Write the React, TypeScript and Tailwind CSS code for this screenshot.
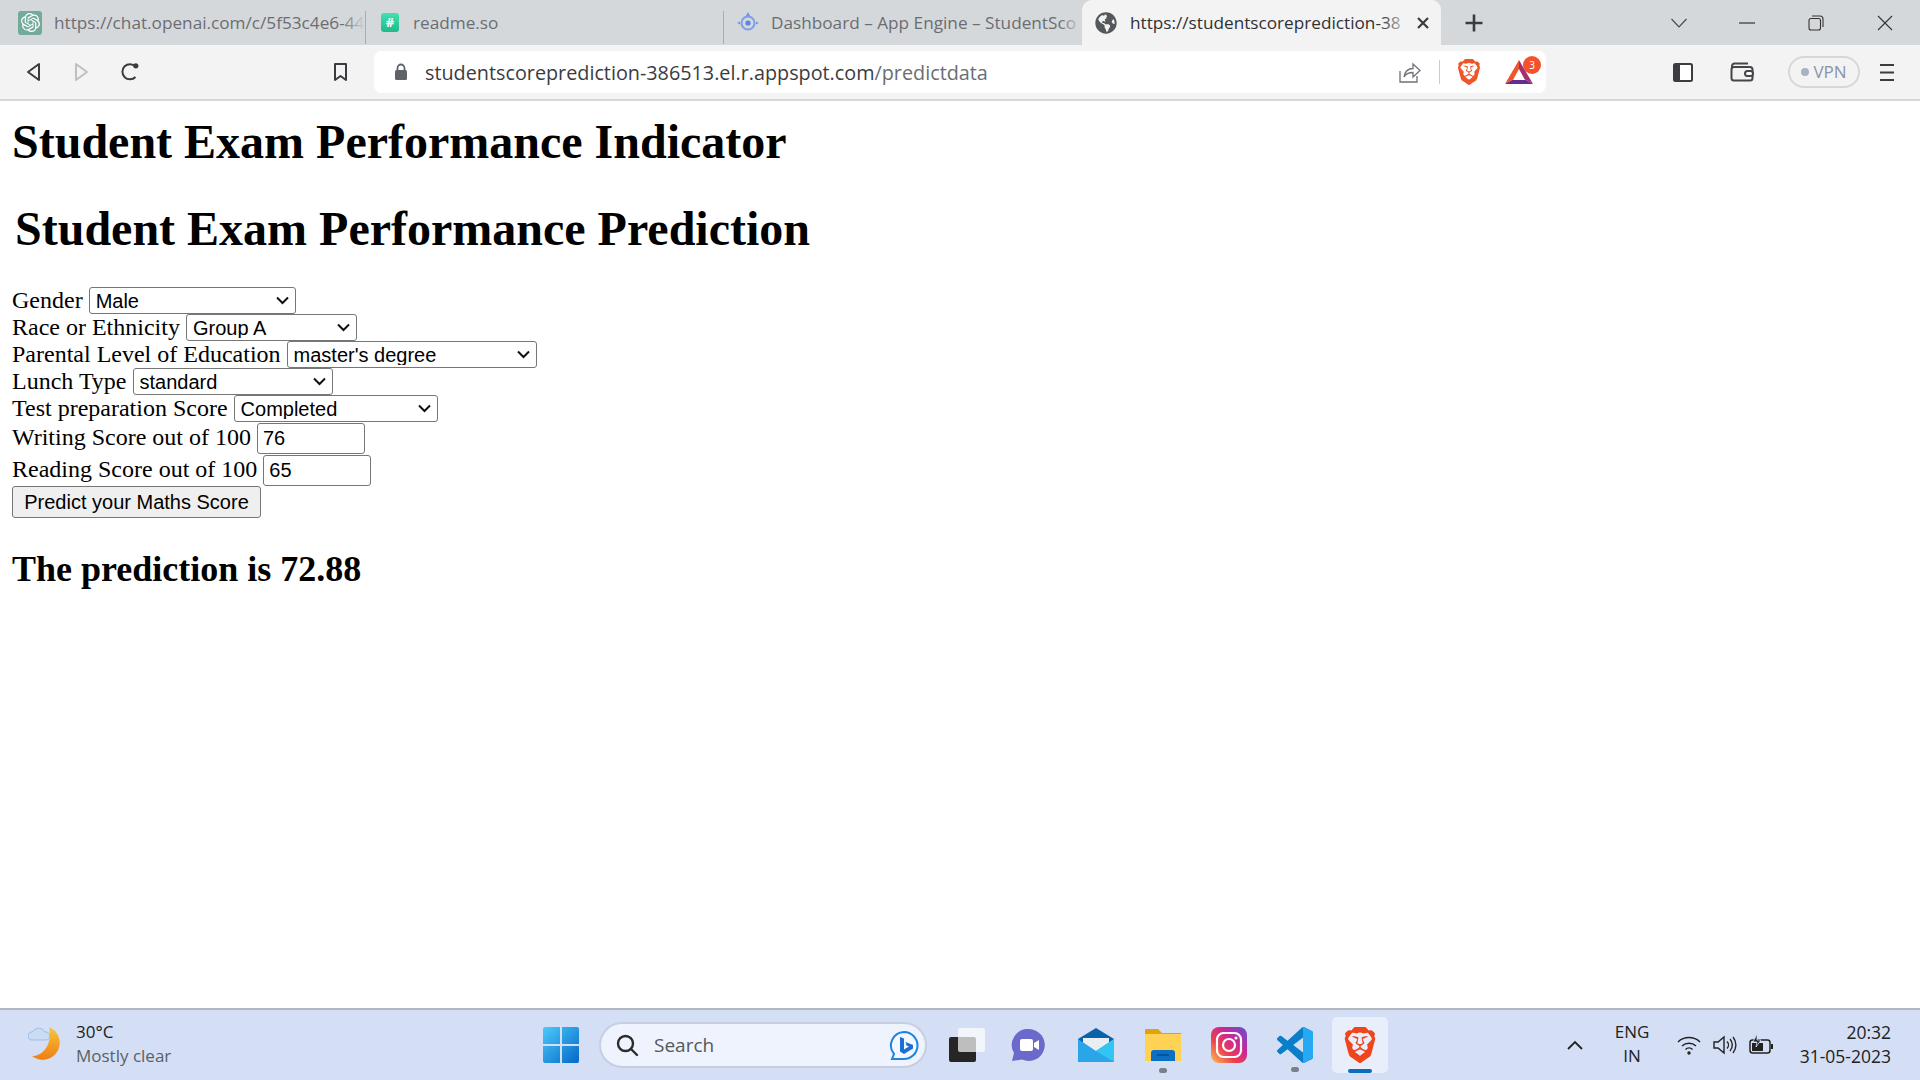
import React from "react";
import { SiOpenai, SiBrave } from "react-icons/si";
import { FaGlobeAmericas } from "react-icons/fa";

const ui = "font-['Open_Sans','Noto_Sans',sans-serif]";

function TabBar() {
  return (
    <div className={`flex h-[45px] bg-[#d5d8db] items-stretch ${ui}`}>
      <div className="w-[366px] shrink-0 flex items-center pl-[18px] relative overflow-hidden">
        <span className="w-[24px] h-[24px] rounded-[3px] bg-[#74aa9c] flex items-center justify-center text-white shrink-0"><SiOpenai size={19} /></span>
        <span className="ml-[12px] text-[17.2px] text-[#6a6e73] whitespace-nowrap">https://chat.openai.com/c/5f53c4e6-44</span>
        <span className="absolute right-0 top-0 bottom-0 w-[24px] bg-gradient-to-r from-transparent to-[#d5d8db]" />
        <span className="absolute right-0 top-[11px] bottom-[1px] w-[1px] bg-[#a9adb1]" />
      </div>
      <div className="w-[358px] shrink-0 flex items-center pl-[15px] relative">
        <span className="w-[18px] h-[19px] rounded-[3px] bg-gradient-to-b from-[#3fe3ae] to-[#22b78c] text-white flex items-center justify-center text-[13px] font-bold leading-none">#</span>
        <span className="ml-[14px] text-[17.2px] text-[#6a6e73]">readme.so</span>
        <span className="absolute right-0 top-[11px] bottom-[1px] w-[1px] bg-[#a9adb1]" />
      </div>
      <div className="w-[358px] shrink-0 flex items-center pl-[11px] relative overflow-hidden">
        <svg className="shrink-0" width="26" height="26" viewBox="0 0 26 26" fill="none">
          <circle cx="13" cy="13" r="6.5" stroke="#7d9ee8" strokeWidth="2" />
          <circle cx="13" cy="13" r="2.6" fill="#5b85e0" />
          <path d="M13 2l2.2 4h-4.4zM2 13l3-1.6v3.2zM24 13l-3-1.6v3.2z" fill="#6f95ea" />
        </svg>
        <span className="ml-[10px] text-[17.2px] text-[#6a6e73] whitespace-nowrap">Dashboard – App Engine – StudentSco</span>
        <span className="absolute right-0 top-0 bottom-0 w-[22px] bg-gradient-to-r from-transparent to-[#d5d8db]" />
      </div>
      <div className="w-[359px] shrink-0 flex items-center pl-[12px] bg-[#f3f3f3] rounded-t-[10px] relative overflow-hidden">
        <span className="text-[#54575b] mr-[13px] ml-[1px]"><FaGlobeAmericas size={22} /></span>
        <span className="text-[17.2px] text-[#2f3134] whitespace-nowrap">https://studentscoreprediction-38</span>
        <span className="absolute right-0 top-0 bottom-0 w-[60px] flex items-center justify-end pr-[11px] bg-gradient-to-r from-transparent via-[#f3f3f3] to-[#f3f3f3]">
          <svg width="14" height="14" viewBox="0 0 14 14" stroke="#3a3c3f" strokeWidth="2.2"><path d="M2 2l10 10M12 2L2 12" /></svg>
        </span>
      </div>
      <div className="ml-[23px] flex items-center">
        <svg width="20" height="20" viewBox="0 0 20 20" stroke="#3a3c3f" strokeWidth="2.6"><path d="M10 1.5v17M1.5 10h17" /></svg>
      </div>
      <div className="ml-auto flex items-center">
        <svg width="18" height="12" viewBox="0 0 18 12" fill="none" stroke="#44464a" strokeWidth="1.1"><path d="M1.5 2L9 10l7.5-8" /></svg>
        <svg className="ml-[51px]" width="16" height="2" viewBox="0 0 16 2" stroke="#333"><path d="M0 1h16" strokeWidth="1.2" /></svg>
        <svg className="ml-[53px]" width="16" height="16" viewBox="0 0 16 16" fill="none" stroke="#333" strokeWidth="1.1"><rect x="1" y="3.5" width="11.5" height="11.5" rx="2" /><path d="M4 1h8a3 3 0 0 1 3 3v8" /></svg>
        <svg className="ml-[53px] mr-[27px]" width="16" height="16" viewBox="0 0 16 16" stroke="#333" strokeWidth="1.1"><path d="M1 1l14 14M15 1L1 15" /></svg>
      </div>
    </div>
  );
}

function Toolbar() {
  return (
    <div className={`flex h-[56px] bg-[#f3f3f3] border-b-2 border-[#d5d8db] items-start ${ui}`}>
      <div className="h-[54px] flex items-center pl-[26px]">
        <svg width="15" height="20" viewBox="0 0 15 20" fill="none" stroke="#3a3c3f" strokeWidth="2" strokeLinejoin="round"><path d="M13 2v16L2 10z" /></svg>
        <svg className="ml-[33px]" width="15" height="20" viewBox="0 0 15 20" fill="none" stroke="#bdbfc2" strokeWidth="2" strokeLinejoin="round"><path d="M2 2v16l11-8z" /></svg>
        <svg className="ml-[31px]" width="20" height="20" viewBox="0 0 20 20" fill="none" stroke="#3a3c3f" strokeWidth="2"><path d="M15.5 15a7.6 7.6 0 1 1 0-10.5" /><circle cx="15.8" cy="3.8" r="2.6" fill="#3a3c3f" stroke="none" /></svg>
        <svg className="ml-[193px]" width="15" height="20" viewBox="0 0 15 20" fill="none" stroke="#3a3c3f" strokeWidth="2" strokeLinejoin="round"><path d="M2 2h11v16l-5.500-4L2 18z" /></svg>
      </div>
      <div className="ml-[26px] mt-[6px] w-[1172px] h-[42px] bg-white rounded-[8px] flex items-center pl-[20px] relative">
        <svg width="14" height="18" viewBox="0 0 14 18"><rect x="1" y="7" width="12" height="10" rx="1.500" fill="#5f6368" /><path d="M3.500 8V5a3.500 3.500 0 0 1 7 0v3" fill="none" stroke="#5f6368" strokeWidth="1.800" /></svg>
        <span className="ml-[17px] mt-[1px] text-[19.8px] text-[#3a3c3f] whitespace-nowrap">studentscoreprediction-386513.el.r.appspot.com<span className="text-[#6a6e73]">/predictdata</span></span>
        <div className="ml-auto flex items-center">
          <svg width="23" height="21" viewBox="0 0 23 21" fill="none" stroke="#6f7276" strokeWidth="1.300"><path d="M2 9v11h17v-6" /><path d="M6 15c1-6 5-8.500 9-8.500V2l7 6.500-7 6.500v-4.500c-4 0-7 1-9 4.500z" /></svg>
          <span className="ml-[18px] w-[1px] h-[24px] bg-[#c9cbce]" />
          <span className="ml-[16px] text-[#f0552a]"><SiBrave size={26} /></span>
          <span className="ml-[23px] mr-[13px] relative w-[28px] h-[24px] block">
            <svg width="28" height="24" viewBox="0 0 28 24"><path d="M14 0L0 24l14-8z" fill="#f0552a" /><path d="M14 0l14 24-14-8z" fill="#a42f6f" /><path d="M0 24h28l-14-8z" fill="#662d91" /><path d="M14 9l-6 11h12z" fill="#fff" /></svg>
            <span className="absolute -right-[8px] -top-[4px] w-[18px] h-[18px] rounded-full bg-[#f4512c] text-white text-[10px] leading-[18px] text-center">3</span>
          </span>
        </div>
      </div>
      <div className="h-[54px] flex items-center ml-[127px]">
        <svg width="20" height="19" viewBox="0 0 20 19"><rect x="1" y="1" width="18" height="17" rx="1.500" fill="#fff" stroke="#3a3c3f" strokeWidth="2" /><rect x="1" y="1" width="6" height="17" fill="#3a3c3f" /></svg>
        <svg className="ml-[37px]" width="24" height="20" viewBox="0 0 24 20" fill="none" stroke="#44464a" strokeWidth="2"><path d="M2 6V4a2.500 2.500 0 0 1 2.500-2.500H18" /><rect x="1.500" y="5" width="21" height="13.500" rx="2.500" /><rect x="15" y="9" width="8" height="5" rx="2.500" fill="#fff" /></svg>
        <div className="ml-[34px] w-[72px] h-[32px] rounded-full border-2 border-[#d5d7da] flex items-center justify-center gap-[4px]">
          <span className="w-[8px] h-[8px] rounded-full bg-[#aab2c2]" />
          <span className="text-[17px] text-[#8b95a8]">VPN</span>
        </div>
        <svg className="ml-[20px]" width="14" height="19" viewBox="0 0 14 19" stroke="#3a3c3f" strokeWidth="2"><path d="M0 2h14M0 9.500h14M0 17h14" /></svg>
      </div>
    </div>
  );
}

const field = "bg-white border border-[#767676] rounded-[3px] text-black text-[20px] font-['Liberation_Sans',sans-serif]";

function Sel({ w, v }: { w: string; v: string }) {
  return (
    <span className="relative ml-[6px] block">
      <select defaultValue={v} className={`${field} ${w} h-[27px] pl-[6px] appearance-none block`}>
        <option>{v}</option>
      </select>
      <svg className="absolute right-[7px] top-[9px] pointer-events-none" width="13" height="9" viewBox="0 0 13 9" fill="none" stroke="#111" strokeWidth="2"><path d="M1 1.500l5.500 5.500L12 1.500" /></svg>
    </span>
  );
}

function Content() {
  const label = "-mt-[2px]";
  return (
    <div className="h-[907px] bg-white text-black font-['Liberation_Serif',serif] pl-[12px] overflow-hidden">
      <h1 className="text-[48px] font-bold leading-[52px] mt-[15px]">Student Exam Performance Indicator</h1>
      <h1 className="text-[48px] font-bold leading-[52px] mt-[35px] ml-[3px]">Student Exam Performance Prediction</h1>
      <form className="mt-[32px] text-[24px]">
        <div className="flex items-center h-[27px] leading-none"><span className={label}>Gender</span><Sel w="w-[207px]" v="Male" /></div>
        <div className="flex items-center h-[27px] leading-none"><span className={label}>Race or Ethnicity</span><Sel w="w-[171px]" v="Group A" /></div>
        <div className="flex items-center h-[27px] leading-none"><span className={label}>Parental Level of Education</span><Sel w="w-[250px]" v="master's degree" /></div>
        <div className="flex items-center h-[27px] leading-none"><span className={label}>Lunch Type</span><Sel w="w-[200px]" v="standard" /></div>
        <div className="flex items-center h-[27px] leading-none"><span className={label}>Test preparation Score</span><Sel w="w-[204px]" v="Completed" /></div>
        <div className="flex items-center h-[32px] leading-none"><span className={label}>Writing Score out of 100</span><input defaultValue="76" className={`${field} w-[108px] h-[31px] ml-[6px] px-[5px]`} /></div>
        <div className="flex items-center h-[32px] leading-none"><span className={label}>Reading Score out of 100</span><input defaultValue="65" className={`${field} w-[108px] h-[31px] ml-[6px] px-[5px]`} /></div>
        <button type="button" className={`block w-[249px] h-[32px] bg-[#efefef] border border-[#767676] rounded-[3px] text-[20px] font-['Liberation_Sans',sans-serif] text-black`}>Predict your Maths Score</button>
      </form>
      <h2 className="text-[36px] font-bold leading-[38px] mt-[32px]">The prediction is 72.88</h2>
    </div>
  );
}

function Taskbar() {
  return (
    <div className={`h-[72px] bg-[#d4dff5] border-t-2 border-[#b3b7bf] flex items-center relative ${ui}`}>
      <div className="w-[72px] pl-[28px] shrink-0 -mt-[2px]">
        <svg width="36" height="38" viewBox="0 0 36 38">
          <defs><linearGradient id="moon" x1="0" y1="0" x2="0" y2="1"><stop offset="0" stopColor="#f6c63a" /><stop offset="1" stopColor="#ef7e14" /></linearGradient></defs>
          <path d="M21 2a17 17 0 1 1-17 29c11 0 21-12 17-29z" fill="url(#moon)" />
          <path d="M4 15a4 4 0 0 1 .5-8 7 7 0 0 1 12.500 0 4 4 0 0 1 1 8z" fill="#c9dcf4" stroke="#9fbce3" />
        </svg>
      </div>
      <div className="ml-[4px] w-[120px] text-[17px] leading-[24px] -mt-[2px]">
        <div className="text-[#1c1c1c]">30°C</div>
        <div className="text-[#5a5f68]">Mostly clear</div>
      </div>
      <div className="ml-[347px]">
        <svg width="36" height="36" viewBox="0 0 36 36">
          <defs><linearGradient id="win" x1="0" y1="0" x2="1" y2="1"><stop offset="0" stopColor="#4cc9fb" /><stop offset="1" stopColor="#0568c8" /></linearGradient></defs>
          <path d="M0 2a2 2 0 0 1 2-2h15v17H0zM19 0h15a2 2 0 0 1 2 2v15H19zM0 19h17v17H2a2 2 0 0 1-2-2zM19 19h17v15a2 2 0 0 1-2 2H19z" fill="url(#win)" />
        </svg>
      </div>
      <div className="ml-[20px] w-[328px] h-[46px] rounded-full bg-[#eff3fd] border-2 border-[#c6cfe2] flex items-center pl-[14px] relative">
        <svg width="24" height="24" viewBox="0 0 24 24" fill="none" stroke="#2b2b2b" strokeWidth="2.400"><circle cx="10.500" cy="10.500" r="7.500" /><path d="M16 16l6 6" strokeLinecap="round" /></svg>
        <span className="ml-[15px] text-[19px] text-[#55585e]">Search</span>
        <svg className="absolute right-[5px] top-[6px]" width="32" height="32" viewBox="0 0 32 32" fill="none">
          <path d="M16 2a13.500 13.500 0 0 1 0 27H4l2-5A13.500 13.500 0 0 1 16 2z" fill="#f3f7ff" stroke="#1c84e0" strokeWidth="2" />
          <path d="M12 7l4 1.500v11l5-3-2.500-1-1-3.500 7.500 3v3.500L16 24l-4-2.500z" fill="#1a6fd4" />
        </svg>
      </div>
      <div className="ml-[22px] w-[28px] h-[34px] relative shrink-0">
        <span className="absolute left-0 top-[9px] w-[27px] h-[25px] rounded-[2px] bg-[#262626]" />
        <span className="absolute left-[9px] top-0 w-[27px] h-[24px] rounded-[2px] bg-white/70" />
      </div>
      <div className="ml-[34px]">
        <svg width="34" height="34" viewBox="0 0 34 34"><path d="M18 1a16 16 0 1 1-7 30.500L1 33l2-8A16 16 0 0 1 18 1z" fill="#6b69c9" /><rect x="9" y="11" width="13" height="12" rx="2" fill="#fff" /><path d="M23 15l5-3v10l-5-3z" fill="#fff" /></svg>
      </div>
      <div className="ml-[33px]">
        <svg width="36" height="34" viewBox="0 0 36 34">
          <path d="M18 0l18 11v4H0v-4z" fill="#0a62ab" />
          <path d="M5 10h26v14H5z" fill="#e9eef2" />
          <path d="M0 11l18 12 18-12v23H0z" fill="#2aa5e8" />
          <path d="M36 11v23L18 23z" fill="#30c5f3" />
        </svg>
      </div>
      <div className="ml-[31px] relative">
        <svg width="36" height="34" viewBox="0 0 36 34">
          <path d="M0 2a1 1 0 0 1 1-1h12l4 4h19v6H0z" fill="#e2a20b" />
          <path d="M0 6h36v27H0z" fill="#ffd255" />
          <path d="M6 33v-8a3 3 0 0 1 3-3h18a3 3 0 0 1 3 3v8z" fill="#0a6fc2" />
          <path d="M12 27h12" stroke="#054a8c" strokeWidth="1.400" />
        </svg>
        <span className="absolute left-[14px] top-[40px] w-[8px] h-[5px] rounded-full bg-[#7a7f89]" />
      </div>
      <div className="ml-[30px]">
        <svg width="36" height="36" viewBox="0 0 36 36" fill="none">
          <defs><linearGradient id="ig" x1="0" y1="1" x2="1" y2="0"><stop offset="0" stopColor="#fdc24e" /><stop offset="0.35" stopColor="#ee3f4f" /><stop offset="0.65" stopColor="#c9279a" /><stop offset="1" stopColor="#5b51d3" /></linearGradient></defs>
          <rect width="36" height="36" rx="8" fill="url(#ig)" />
          <rect x="6" y="6" width="24" height="24" rx="6.500" stroke="#fff" strokeWidth="2.200" />
          <circle cx="18" cy="18" r="6" stroke="#fff" strokeWidth="2.200" />
          <circle cx="25" cy="11" r="1.500" fill="#fff" />
        </svg>
      </div>
      <div className="ml-[30px] relative">
        <svg width="36" height="36" viewBox="0 0 100 100">
          <defs><clipPath id="vsr"><rect x="72" y="0" width="28" height="100" /></clipPath></defs>
          <path id="vsp" d="M96.460 10.800 75.860.870a6.230 6.230 0 0 0-7.100 1.200L29.300 38.100 12.100 25.100a4.160 4.160 0 0 0-5.300.2L1.300 30.300a4.160 4.160 0 0 0 0 6.160L16.200 50 1.300 63.600a4.160 4.160 0 0 0 0 6.160l5.500 5a4.160 4.160 0 0 0 5.300.2l17.200-13 39.450 36a6.230 6.230 0 0 0 7.100 1.200l20.600-9.900A6.250 6.250 0 0 0 100 83.600V16.400a6.250 6.250 0 0 0-3.540-5.600zM75 72.700 45.100 50 75 27.300z" fill="#0a7fc9" />
          <path clipPath="url(#vsr)" d="M96.460 10.800 75.860.87a6.230 6.230 0 0 0-7.100 1.200L66 100a6.230 6.230 0 0 0 9.860-.87l20.600-9.900A6.250 6.250 0 0 0 100 83.600V16.400a6.250 6.250 0 0 0-3.540-5.600z" fill="#24a9f2" />
        </svg>
        <span className="absolute left-[14px] top-[40px] w-[8px] h-[5px] rounded-full bg-[#7a7f89]" />
      </div>
      <div className="ml-[19px] w-[56px] h-[56px] rounded-[5px] bg-[#e9eefb] flex items-center justify-center text-[#f0441f] relative">
        <SiBrave size={36} />
        <span className="absolute left-[16px] bottom-0 w-[24px] h-[4px] rounded-full bg-[#0f6cbd]" />
      </div>
      <div className="ml-[178px]">
        <svg width="18" height="12" viewBox="0 0 18 12" fill="none" stroke="#222" strokeWidth="1.800"><path d="M2 10l7-7 7 7" /></svg>
      </div>
      <div className="ml-[29px] w-[38px] text-center text-[17px] leading-[24px] text-[#222] -mt-[2px]">ENG<br />IN</div>
      <div className="ml-[26px]">
        <svg width="24" height="20" viewBox="0 0 24 20" fill="none" stroke="#222" strokeWidth="1.500"><path d="M1 7a16 16 0 0 1 22 0M5 11a10.500 10.500 0 0 1 14 0M8.500 14.500a5 5 0 0 1 7 0" /><circle cx="12" cy="18" r="1.700" fill="#222" stroke="none" /></svg>
      </div>
      <div className="ml-[12px]">
        <svg width="24" height="20" viewBox="0 0 24 20" fill="none" stroke="#222" strokeWidth="1.400"><path d="M1 7v6h4l6 5V2L5 7zM14 6.500a5 5 0 0 1 0 7M17 4a9 9 0 0 1 0 12M20 2a12.500 12.500 0 0 1 0 16" /></svg>
      </div>
      <div className="ml-[12px]">
        <svg width="25" height="22" viewBox="0 0 25 22" fill="none"><rect x="1" y="6" width="20" height="13" rx="2.500" stroke="#222" strokeWidth="1.500" /><path d="M3 9h11v8H3z" fill="#222" /><path d="M22 10h2v5h-2z" fill="#222" /><path d="M8 0L4 8h4l-1 5 5-7H8z" fill="#222" stroke="#d4dff5" strokeWidth="0.800" /></svg>
      </div>
      <div className="ml-auto mr-[29px] text-right text-[17.5px] leading-[24px] text-[#222] -mt-[2px]">20:32<br />31-05-2023</div>
    </div>
  );
}

export default function App() {
  return (
    <div className="w-[1920px] h-[1080px] overflow-hidden bg-white">
      <TabBar />
      <Toolbar />
      <Content />
      <Taskbar />
    </div>
  );
}
